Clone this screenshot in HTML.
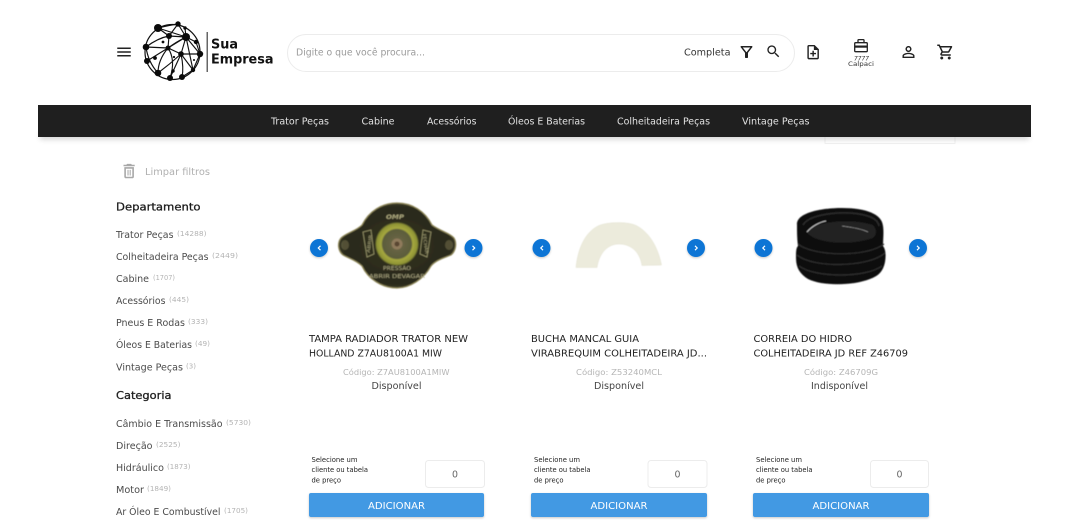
<!DOCTYPE html>
<html lang="pt-BR">
<head>
<meta charset="utf-8">
<title>Sua Empresa</title>
<style>
html,body{margin:0;padding:0;background:#fff;width:1069px;height:520px;overflow:hidden}
svg{display:block}
text{font-family:"DejaVu Sans","Liberation Sans",sans-serif;white-space:pre}
.nav{font-size:9.5px;fill:#e2e2e2}
.it{font-size:9.5px;fill:#4a4a4a}
.ct{font-size:7px;fill:#b4b4b4}
.h{font-size:11px;fill:#1c1c1c;stroke:#1c1c1c;stroke-width:.3px}
.tt{font-size:9.5px;fill:#222}
.cd{font-size:8px;fill:#b5b5b5}
.st{font-size:9.500px;fill:#444}
.lb{font-size:6.8px;fill:#222}
.q{font-size:9.500px;fill:#666}
.ad{font-size:10px;fill:#fff}
</style>
</head>
<body>
<svg width="1069" height="520" viewBox="0 0 1069 520" xmlns="http://www.w3.org/2000/svg">
<defs>
<filter id="b1" x="-10%" y="-10%" width="120%" height="120%"><feGaussianBlur stdDeviation=".45"/></filter>
<filter id="sh" x="-5%" y="-80%" width="110%" height="300%"><feGaussianBlur stdDeviation="3"/></filter>
<filter id="bs" x="-30%" y="-30%" width="160%" height="160%"><feDropShadow dx="0" dy="1" stdDeviation="1" flood-color="#000" flood-opacity=".22"/></filter>
<radialGradient id="cap" cx=".5" cy=".5" r=".6"><stop offset="0" stop-color="#33321f"/><stop offset=".75" stop-color="#2a2a1b"/><stop offset="1" stop-color="#55533a"/></radialGradient>
<radialGradient id="cen" cx=".5" cy=".5" r=".5"><stop offset="0" stop-color="#70694a"/><stop offset=".65" stop-color="#5b5c3b"/><stop offset=".72" stop-color="#a6a83f"/><stop offset=".92" stop-color="#8e9334"/><stop offset="1" stop-color="#3a3a22"/></radialGradient>
</defs>

<!-- hamburger -->
<path transform="translate(115,43) scale(.75)" fill="#222" d="M3 18h18v-2H3v2zm0-5h18v-2H3v2zm0-7v2h18V6H3z"/>

<!-- logo -->
<g stroke="#111" stroke-width="1.15" fill="none">
<circle cx="172.500" cy="52" r="27.500" stroke-width="1.200"/>
<path d="M158 28Q170 25 178 24L186 37L169 36L158 28M146 47Q158 38 169 36M146 47L168 48L181 54L186 37L196 42L200 54L181 54L193 70M169 36L186 37L168 48L147 61M168 48Q158 60 158 73M181 54L170 78M181 54Q184 68 182 77M186 37L193 70M186 37L200 54M178 24L186 37L185 28M158 28L186 37M181 54Q170 64 158 73M146 47Q148 62 158 73M169 36L168 48M178 24L169 36M182 77L193 70L200 54M168 48Q176 60 170 78M186 37Q176 42 168 48"/>
</g>
<g fill="#0a0a0a">
<circle cx="158" cy="28" r="4"/><circle cx="178" cy="24" r="2.700"/><circle cx="186" cy="37" r="4"/><circle cx="169" cy="36" r="3"/><circle cx="146" cy="47" r="3.300"/><circle cx="168" cy="48" r="2.500"/><circle cx="196" cy="42" r="2.200"/><circle cx="200" cy="54" r="3.200"/><circle cx="181" cy="54" r="2.800"/><circle cx="147" cy="61" r="3"/><circle cx="158" cy="73" r="3.300"/><circle cx="170" cy="78" r="3"/><circle cx="182" cy="77" r="3"/><circle cx="193" cy="70" r="2.200"/><circle cx="185" cy="28" r="1.700"/><circle cx="163" cy="42" r="1.400"/><circle cx="155" cy="58" r="1.900"/><circle cx="173" cy="71" r="1.700"/><circle cx="174" cy="57" r="1.100"/><circle cx="194" cy="60" r="1"/>
</g>
<rect x="206.500" y="32" width="1.500" height="40" fill="#666"/>
<text x="211" y="48.500" font-size="13.500" font-weight="bold" fill="#111" textLength="27" lengthAdjust="spacingAndGlyphs">Sua</text>
<text x="211" y="63.500" font-size="13.500" font-weight="bold" fill="#111" textLength="62.500" lengthAdjust="spacingAndGlyphs">Empresa</text>

<!-- search -->
<rect x="287.500" y="34.500" width="507" height="37" rx="18.500" fill="#fff" stroke="#ececec"/>
<text x="296" y="55.500" font-size="9.500" fill="#9a9a9a" textLength="129" lengthAdjust="spacingAndGlyphs">Digite o que você procura...</text>
<text x="684" y="55.500" font-size="9.500" fill="#333" textLength="46.500" lengthAdjust="spacingAndGlyphs">Completa</text>
<path transform="translate(737.500,43) scale(.75)" fill="#222" d="M7 6h10l-5.010 6.300L7 6zm-2.750-.39C6.270 8.200 10 13 10 13v6c0 .55.45 1 1 1h2c.55 0 1-.45 1-1v-6s3.720-4.800 5.740-7.390c.51-.66.04-1.610-.79-1.610H5.040c-.83 0-1.300.95-.79 1.610z"/>
<path transform="translate(765.300,43.300) scale(.68)" fill="#222" d="M15.500 14h-.79l-.28-.27C15.410 12.590 16 11.110 16 9.500 16 5.910 13.090 3 9.500 3S3 5.910 3 9.500 5.910 16 9.500 16c1.610 0 3.090-.59 4.230-1.570l.27.28v.79l5 4.990L20.490 19l-4.990-5zm-6 0C7.010 14 5 11.990 5 9.500S7.010 5 9.500 5 14 7.010 14 9.500 11.990 14 9.500 14z"/>

<!-- header icons -->
<path transform="translate(804.500,43.500) scale(.72)" fill="#222" d="M14 2H6c-1.100 0-2 .9-2 2v16c0 1.100.89 2 1.990 2H18c1.100 0 2-.9 2-2V8l-6-6zm4 18H6V4h7v5h5v11zm-7-7h-3v2h3v3h2v-3h3v-2h-3v-3h-2z"/>
<g fill="none" stroke="#222" stroke-width="1.300">
<rect x="854.700" y="42.700" width="12.600" height="9" rx="1"/>
<path d="M858 42.500v-2.300c0-.4.3-.6.7-.6h4.600c.4 0 .7.2.7.6v2.300"/>
</g>
<rect x="855" y="45.500" width="12" height="2.200" fill="#222"/>
<text x="854" y="60.500" font-size="6" font-style="italic" fill="#333" textLength="15" lengthAdjust="spacingAndGlyphs">7777</text>
<text x="848" y="66" font-size="6" fill="#333" textLength="26" lengthAdjust="spacingAndGlyphs">Calpaci</text>
<path transform="translate(899.500,43) scale(.75)" fill="#222" d="M12 5.900c1.160 0 2.100.94 2.100 2.100s-.94 2.100-2.100 2.100S9.900 9.160 9.900 8s.94-2.100 2.100-2.100m0 9c2.970 0 6.100 1.460 6.100 2.100v1.100H5.900V17c0-.64 3.130-2.100 6.100-2.100M12 4C9.790 4 8 5.790 8 8s1.790 4 4 4 4-1.790 4-4-1.790-4-4-4zm0 9c-2.670 0-8 1.340-8 4v3h16v-3c0-2.660-5.330-4-8-4z"/>
<path transform="translate(936.500,43) scale(.75)" fill="#222" d="M15.550 13c.75 0 1.410-.41 1.750-1.030l3.580-6.490c.37-.66-.11-1.480-.87-1.480H5.210l-.94-2H1v2h2l3.600 7.590-1.350 2.440C4.520 15.370 5.480 17 7 17h12v-2H7l1.100-2h7.450zM6.160 6h12.150l-2.760 5H8.530L6.160 6zM7 18c-1.100 0-1.990.9-1.990 2S5.900 22 7 22s2-.9 2-2-.9-2-2-2zm10 0c-1.100 0-1.990.9-1.990 2s.89 2 1.990 2 2-.9 2-2-.9-2-2-2z"/>

<!-- nav -->
<rect x="825" y="128" width="130" height="15.500" fill="#fff" stroke="#f1f1f1"/>
<rect x="40" y="133" width="989" height="6" fill="#000" opacity=".2" filter="url(#sh)"/>
<rect x="38" y="105" width="993" height="32" fill="#1f1f1f"/>
<text class="nav" x="271" y="124.500" textLength="58" lengthAdjust="spacingAndGlyphs">Trator Peças</text>
<text class="nav" x="361.500" y="124.500" textLength="33" lengthAdjust="spacingAndGlyphs">Cabine</text>
<text class="nav" x="427" y="124.500" textLength="49.500" lengthAdjust="spacingAndGlyphs">Acessórios</text>
<text class="nav" x="508" y="124.500" textLength="77" lengthAdjust="spacingAndGlyphs">Óleos E Baterias</text>
<text class="nav" x="617" y="124.500" textLength="93" lengthAdjust="spacingAndGlyphs">Colheitadeira Peças</text>
<text class="nav" x="742" y="124.500" textLength="67.500" lengthAdjust="spacingAndGlyphs">Vintage Peças</text>

<!-- sidebar -->
<path transform="translate(119.500,161.500) scale(.8)" fill="#a8a8a8" d="M6 19c0 1.100.9 2 2 2h8c1.100 0 2-.9 2-2V7H6v12zM8 9h8v10H8V9zm2 1.500h1.300v7H10zm2.700 0H14v7h-1.300zM15.500 4l-1-1h-5l-1 1H5v2h14V4z"/>
<text x="145" y="175" font-size="9.500" fill="#b0b0b0" textLength="65" lengthAdjust="spacingAndGlyphs">Limpar filtros</text>

<text class="h" x="116" y="210.500" textLength="84.500" lengthAdjust="spacingAndGlyphs">Departamento</text>
<text class="it" x="116" y="238" textLength="57.500" lengthAdjust="spacingAndGlyphs">Trator Peças</text><text class="ct" x="177" y="236" textLength="29.500" lengthAdjust="spacingAndGlyphs">(14288)</text>
<text class="it" x="116" y="260" textLength="92.500" lengthAdjust="spacingAndGlyphs">Colheitadeira Peças</text><text class="ct" x="212" y="258" textLength="26" lengthAdjust="spacingAndGlyphs">(2449)</text>
<text class="it" x="116" y="282" textLength="33" lengthAdjust="spacingAndGlyphs">Cabine</text><text class="ct" x="153" y="280" textLength="22" lengthAdjust="spacingAndGlyphs">(1707)</text>
<text class="it" x="116" y="304" textLength="49.500" lengthAdjust="spacingAndGlyphs">Acessórios</text><text class="ct" x="169" y="302" textLength="20" lengthAdjust="spacingAndGlyphs">(445)</text>
<text class="it" x="116" y="326" textLength="69" lengthAdjust="spacingAndGlyphs">Pneus E Rodas</text><text class="ct" x="188" y="324" textLength="20" lengthAdjust="spacingAndGlyphs">(333)</text>
<text class="it" x="116" y="348" textLength="76" lengthAdjust="spacingAndGlyphs">Óleos E Baterias</text><text class="ct" x="195" y="346" textLength="15" lengthAdjust="spacingAndGlyphs">(49)</text>
<text class="it" x="116" y="370.500" textLength="67" lengthAdjust="spacingAndGlyphs">Vintage Peças</text><text class="ct" x="186" y="368.500" textLength="10" lengthAdjust="spacingAndGlyphs">(3)</text>

<text class="h" x="116" y="399" textLength="55.500" lengthAdjust="spacingAndGlyphs">Categoria</text>
<text class="it" x="116" y="427" textLength="106.500" lengthAdjust="spacingAndGlyphs">Câmbio E Transmissão</text><text class="ct" x="226" y="425" textLength="25" lengthAdjust="spacingAndGlyphs">(5730)</text>
<text class="it" x="116" y="449" textLength="36.500" lengthAdjust="spacingAndGlyphs">Direção</text><text class="ct" x="156" y="447" textLength="24.500" lengthAdjust="spacingAndGlyphs">(2525)</text>
<text class="it" x="116" y="471" textLength="48" lengthAdjust="spacingAndGlyphs">Hidráulico</text><text class="ct" x="167" y="469" textLength="23.500" lengthAdjust="spacingAndGlyphs">(1873)</text>
<text class="it" x="116" y="493" textLength="28" lengthAdjust="spacingAndGlyphs">Motor</text><text class="ct" x="147" y="491" textLength="24" lengthAdjust="spacingAndGlyphs">(1849)</text>
<text class="it" x="116" y="515" textLength="104.500" lengthAdjust="spacingAndGlyphs">Ar Óleo E Combustível</text><text class="ct" x="224" y="513" textLength="24" lengthAdjust="spacingAndGlyphs">(1705)</text>

<!-- product 1 image -->
<g filter="url(#b1)">
<path d="M397 203C412 203 425 211 432 225C440 231 450 233 454 238C457 243 456 251 451 255C444 258 436 260 431 266C424 279 410 288 397 288C382 288 368 279 362 266C356 260 348 258 343 255C338 251 337 243 341 238C346 233 356 231 362 225C369 211 382 203 397 203Z" fill="url(#cap)" stroke="#8f885a" stroke-width="1.200"/>
<circle cx="397" cy="244" r="22" fill="url(#cen)"/>
<circle cx="397" cy="244" r="5.500" fill="#8f7a5c"/>
<circle cx="397" cy="244" r="2.500" fill="#5a4632"/>
<path d="M363 232l8-2 3 24-7 3zM431 232l-8-2-3 24 7 3z" fill="none" stroke="#9a966a" stroke-width=".8"/>
<text x="386" y="219" font-size="6" font-style="italic" font-weight="bold" fill="#a8a47a" textLength="18" lengthAdjust="spacingAndGlyphs">OMP</text>
<text x="-9" y="0" transform="translate(371,244) rotate(-82)" font-size="4.500" fill="#a8a47a" textLength="18" lengthAdjust="spacingAndGlyphs">ABRIR</text>
<text x="-10" y="0" transform="translate(424,244) rotate(82)" font-size="4.500" fill="#a8a47a" textLength="20" lengthAdjust="spacingAndGlyphs">FECHAR</text>
<text x="383" y="270" font-size="5" fill="#aaa680" textLength="28" lengthAdjust="spacingAndGlyphs">PRESSÃO</text>
<text x="369" y="278" font-size="5" fill="#aaa680" textLength="56" lengthAdjust="spacingAndGlyphs">ABRIR DEVAGAR</text>
<ellipse cx="345" cy="245" rx="4" ry="5" fill="#7a7650" opacity=".5"/>
<ellipse cx="449" cy="245" rx="4" ry="5" fill="#7a7650" opacity=".5"/>
</g>

<!-- product 2 image -->
<g filter="url(#b1)">
<path d="M576 267.500C578 247 586 232 598 226C606 222 628 221 637 226C650 233 658 248 661.500 265L642 265.500C640 252 631 244 619 244C607 244 599 254 597 267.500Z" fill="#ecebdc" stroke="#e2e1cf" stroke-width=".5"/>
</g>

<!-- product 3 image -->
<g filter="url(#b1)">
<path d="M797 225C796 213 820 208 842 208C866 208 882 214 883 226C884 232 883 240 883 246C886 250 886 256 885 262C883 272 878 276 870 279C852 286 822 286 808 279C800 274 796 268 796 258C796 252 796 248 798 246C797 238 797 232 797 225Z" fill="#111"/>
<path d="M803 225C808 216 830 212 850 213C866 214 878 218 879 226" fill="none" stroke="#2c2c2c" stroke-width="1.500"/>
<path d="M806 232C814 221 852 218 873 225C877 229 877 235 873 238C850 246 816 244 806 232Z" fill="#202020"/>
<path d="M807 232C812 226 820 222 826 221" fill="none" stroke="#ddd" stroke-width=".8"/>
<path d="M842 226C850 227 862 229 868 232" fill="none" stroke="#aaa" stroke-width=".6"/>
<path d="M798 244C812 256 866 258 884 244M797 255C812 268 868 268 885 253M799 266C815 278 866 278 882 266" fill="none" stroke="#2d2d2d" stroke-width="1.200"/>
</g>

<!-- carousel buttons -->
<g filter="url(#bs)" fill="#0a75d5">
<circle cx="319" cy="248" r="9"/><circle cx="473.500" cy="248" r="9"/>
<circle cx="541.500" cy="248" r="9"/><circle cx="696" cy="248" r="9"/>
<circle cx="763.500" cy="248" r="9"/><circle cx="918" cy="248" r="9"/>
</g>
<g fill="none" stroke="#fff" stroke-width="1.200">
<path d="M320.500 245.800L318.300 248L320.500 250.200M472.500 245.800L474.700 248L472.500 250.200M543 245.800L540.800 248L543 250.200M695 245.800L697.200 248L695 250.200M765 245.800L762.800 248L765 250.200M917 245.800L919.200 248L917 250.200"/>
</g>

<!-- product 1 text -->
<text class="tt" x="309" y="342" textLength="159" lengthAdjust="spacingAndGlyphs">TAMPA RADIADOR TRATOR NEW</text>
<text class="tt" x="309" y="356.500" textLength="133" lengthAdjust="spacingAndGlyphs">HOLLAND Z7AU8100A1 MIW</text>
<text class="cd" x="343" y="375" textLength="106.500" lengthAdjust="spacingAndGlyphs">Código: Z7AU8100A1MIW</text>
<text class="st" x="371.500" y="389" textLength="50" lengthAdjust="spacingAndGlyphs">Disponível</text>
<text class="lb" x="311.500" y="462" textLength="46" lengthAdjust="spacingAndGlyphs">Selecione um</text>
<text class="lb" x="311.500" y="472" textLength="56.500" lengthAdjust="spacingAndGlyphs">cliente ou tabela</text>
<text class="lb" x="311.500" y="482.500" textLength="29.500" lengthAdjust="spacingAndGlyphs">de preço</text>
<rect x="425.500" y="460.500" width="59" height="27" rx="3" fill="#fff" stroke="#ececec"/>
<text class="q" x="452" y="477.500" textLength="6" lengthAdjust="spacingAndGlyphs">0</text>
<rect x="309" y="493" width="175" height="24" rx="2" fill="#4299e3" filter="url(#bs)"/>
<text class="ad" x="368" y="509" textLength="57" lengthAdjust="spacingAndGlyphs">ADICIONAR</text>

<!-- product 2 text -->
<text class="tt" x="531" y="342" textLength="108" lengthAdjust="spacingAndGlyphs">BUCHA MANCAL GUIA</text>
<text class="tt" x="531" y="356.500" textLength="176" lengthAdjust="spacingAndGlyphs">VIRABREQUIM COLHEITADEIRA JD...</text>
<text class="cd" x="576" y="375" textLength="86" lengthAdjust="spacingAndGlyphs">Código: Z53240MCL</text>
<text class="st" x="594" y="389" textLength="50" lengthAdjust="spacingAndGlyphs">Disponível</text>
<text class="lb" x="534" y="462" textLength="46" lengthAdjust="spacingAndGlyphs">Selecione um</text>
<text class="lb" x="534" y="472" textLength="56.500" lengthAdjust="spacingAndGlyphs">cliente ou tabela</text>
<text class="lb" x="534" y="482.500" textLength="29.500" lengthAdjust="spacingAndGlyphs">de preço</text>
<rect x="648" y="460.500" width="59" height="27" rx="3" fill="#fff" stroke="#ececec"/>
<text class="q" x="674.500" y="477.500" textLength="6" lengthAdjust="spacingAndGlyphs">0</text>
<rect x="531" y="493" width="176" height="24" rx="2" fill="#4299e3" filter="url(#bs)"/>
<text class="ad" x="590.500" y="509" textLength="57" lengthAdjust="spacingAndGlyphs">ADICIONAR</text>

<!-- product 3 text -->
<text class="tt" x="753.500" y="342" textLength="98.500" lengthAdjust="spacingAndGlyphs">CORREIA DO HIDRO</text>
<text class="tt" x="753.500" y="356.500" textLength="154.500" lengthAdjust="spacingAndGlyphs">COLHEITADEIRA JD REF Z46709</text>
<text class="cd" x="804" y="375" textLength="74" lengthAdjust="spacingAndGlyphs">Código: Z46709G</text>
<text class="st" x="811" y="389" textLength="57" lengthAdjust="spacingAndGlyphs">Indisponível</text>
<text class="lb" x="756" y="462" textLength="46" lengthAdjust="spacingAndGlyphs">Selecione um</text>
<text class="lb" x="756" y="472" textLength="56.500" lengthAdjust="spacingAndGlyphs">cliente ou tabela</text>
<text class="lb" x="756" y="482.500" textLength="29.500" lengthAdjust="spacingAndGlyphs">de preço</text>
<rect x="870.500" y="460.500" width="58" height="27" rx="3" fill="#fff" stroke="#ececec"/>
<text class="q" x="896.500" y="477.500" textLength="6" lengthAdjust="spacingAndGlyphs">0</text>
<rect x="753" y="493" width="176" height="24" rx="2" fill="#4299e3" filter="url(#bs)"/>
<text class="ad" x="812.500" y="509" textLength="57" lengthAdjust="spacingAndGlyphs">ADICIONAR</text>
</svg>
</body>
</html>
